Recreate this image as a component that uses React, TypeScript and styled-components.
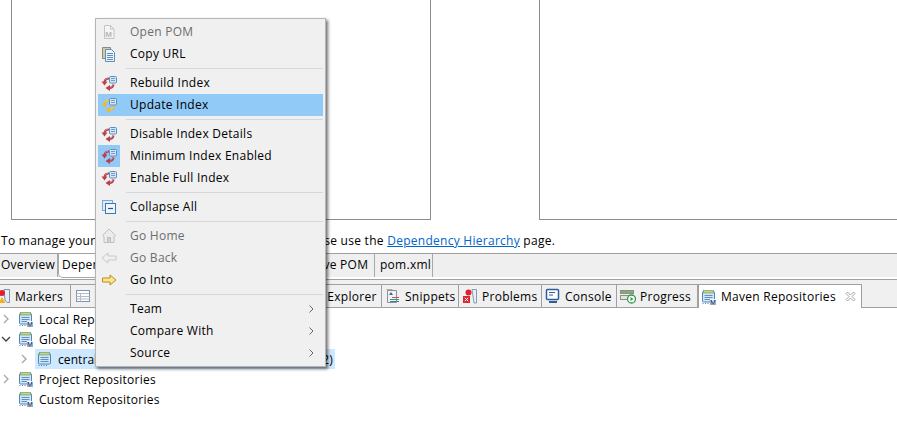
import React from "react";
import styled, { createGlobalStyle } from "styled-components";

const Global = createGlobalStyle`
  html, body { margin: 0; padding: 0; background: #fff; }
  body { font-family: "Open Sans", "Noto Sans", "Liberation Sans", sans-serif; font-size: 12px; color: #000; letter-spacing: .27px; }
`;

const Page = styled.div`
  position: relative;
  width: 897px;
  height: 426px;
  overflow: hidden;
  background: #fff;
`;
const Panels = styled.div`
  display: flex;
  height: 220px;
  padding-left: 11px;
  box-sizing: border-box;
`;
const LeftPanel = styled.div`
  width: 420px;
  box-sizing: border-box;
  border: 1px solid #8c8c8c;
  border-top: 0;
`;
const RightPanel = styled.div`
  flex: 1;
  margin-left: 108px;
  border-left: 1px solid #8c8c8c;
  border-bottom: 1px solid #8c8c8c;
`;
const Hint = styled.div`
  height: 33px;
  box-sizing: border-box;
  padding: 12px 0 0 1px;
  line-height: 18px;
  white-space: nowrap;
`;
const Link = styled.a`
  color: #0066cc;
  text-decoration: underline;
`;
const EditorBar = styled.div`
  display: flex;
  height: 23px;
  background: #efefef;
  border-top: 1px solid #a0a0a0;
  margin-bottom: 2px;
`;
const EditorTab = styled.div<{ $w: number; $pad: number; $active?: boolean }>`
  width: ${(p) => p.$w}px;
  box-sizing: border-box;
  height: ${(p) => (p.$active ? 24 : 23)}px;
  padding-left: ${(p) => p.$pad}px;
  line-height: 22px;
  white-space: nowrap;
  background: ${(p) => (p.$active ? "#fff" : "#efefef")};
  border-right: 1px solid #a8a8a8;
  border-left: ${(p) => (p.$active ? "1px solid #a8a8a8" : "0")};
  border-bottom: ${(p) => (p.$active ? "1px solid #a8a8a8" : "0")};
  border-bottom-left-radius: ${(p) => (p.$active ? 5 : 0)}px;
`;
const ViewBar = styled.div`
  display: flex;
  height: 23px;
  padding-top: 4px;
  background: #f0f0f0;
  border-top: 1px solid #a0a0a0;
  border-bottom: 1px solid #a0a0a0;
`;
const ViewTab = styled.div<{ $w: number; $pad?: number; $active?: boolean }>`
  display: flex;
  align-items: center;
  flex: none;
  width: ${(p) => p.$w}px;
  box-sizing: border-box;
  height: ${(p) => (p.$active ? 24 : 23)}px;
  gap: 4px;
  padding-left: ${(p) => p.$pad ?? 3}px;
  white-space: nowrap;
  background: ${(p) => (p.$active ? "#fff" : "#f0f0f0")};
  border-top: 1px solid #a0a0a0;
  border-right: 1px solid #a0a0a0;
  border-left: ${(p) => (p.$active ? "1px solid #a0a0a0" : "0")};
`;
const ClippedTab = styled(ViewTab)`
  overflow: hidden;
`;
const Spacer = styled.span`
  flex: 1;
`;
const Tree = styled.div`
  display: flex;
  flex-direction: column;
  margin-top: 1px;
`;
const TreeRow = styled.div<{ $level: number }>`
  display: flex;
  align-items: center;
  height: 20px;
  padding-left: ${(p) => p.$level * 18}px;
  white-space: nowrap;
`;
const Twisty = styled.span`
  display: flex;
  justify-content: center;
  width: 12px;
  flex: none;
  margin-right: 6px;
`;
const TreeLabel = styled.span<{ $selected?: boolean }>`
  display: flex;
  align-items: center;
  gap: 5px;
  height: 20px;
  padding-right: 2px;
  margin-left: ${(p) => (p.$selected ? -1 : 0)}px;
  padding-left: ${(p) => (p.$selected ? 2 : 0)}px;
  letter-spacing: ${(p) => (p.$selected ? ".07px" : "inherit")};
  background: ${(p) => (p.$selected ? "#cde8ff" : "transparent")};
`;
const Menu = styled.div`
  position: absolute;
  left: 95px;
  top: 18px;
  width: 231px;
  box-sizing: border-box;
  padding: 2px;
  background: #f0f0f0;
  border: 1px solid #b5b5b5;
  box-shadow: 2px 2px 3px rgba(0, 0, 0, 0.55);
`;
const MenuItem = styled.div<{ $hover?: boolean; $disabled?: boolean }>`
  display: flex;
  align-items: center;
  height: 22px;
  white-space: nowrap;
  color: ${(p) => (p.$disabled ? "#6d6d6d" : "#000")};
  background: ${(p) => (p.$hover ? "#91c9f7" : "transparent")};
`;
const IconCell = styled.span<{ $checked?: boolean }>`
  display: flex;
  align-items: center;
  justify-content: center;
  flex: none;
  width: 22px;
  height: 22px;
  margin-right: 10px;
  background: ${(p) => (p.$checked ? "#91c9f7" : "transparent")};
`;
const ItemLabel = styled.span`
  flex: 1;
  padding-bottom: 2px;
`;
const Arrow = styled.span`
  display: flex;
  margin-right: 9px;
`;
const Separator = styled.div`
  height: 7px;
  margin-left: 28px;
  display: flex;
  align-items: center;
  &::before {
    content: "";
    flex: 1;
    height: 1px;
    background: #d7d7d7;
  }
`;

const RepoIcon = ({ badge = true }: { badge?: boolean }) => (
  <svg width="16" height="16" viewBox="0 0 16 16" style={{ flex: "none" }}>
    <rect x="1.5" y="2.5" width="12" height="10.5" rx="1" fill="#d3e6f8" stroke="#4f86b8" />
    <rect x="2.5" y="1.5" width="10" height="2.5" fill="#b9d58a" stroke="#7a9c66" strokeWidth=".7" />
    <path d="M3.500 6.500h8M3.500 8.500h8M3.500 10.500h8" stroke="#5f92c4" />
    <path d="M1.500 14.500h1M4 14.500h1M6.500 14.500h1M9 14.500h1" stroke="#4f86b8" />
    {badge && (
      <>
        <rect x="9" y="10" width="7" height="6" fill="#fff" opacity=".9" />
        <text x="9" y="15.800" fontSize="7" fontWeight="700" letterSpacing="0" fontFamily="Liberation Sans" fill="#1f4f86">M</text>
      </>
    )}
  </svg>
);

const IndexIcon = ({ yellow }: { yellow?: boolean }) => {
  const main = yellow ? "#eeb92e" : "#b8404a";
  return (
    <svg width="16" height="16" viewBox="0 0 16 16">
      <rect x="8.500" y="1.500" width="7" height="6.500" rx="1" fill="#d3e6f8" stroke="#5f8fbd" />
      <path d="M10 3.500h4M10 5.500h4" stroke="#6f9cc8" />
      <path d="M8 3.500C5.500 3.500 3.800 4.800 3.500 7" fill="none" stroke={main} strokeWidth="2.200" />
      <path d="M0.500 6.500h6l-3 4z" fill={main} />
      <path d="M7 3.200C5.500 3.300 4.500 4 4 5.200" fill="none" stroke="#fff" strokeOpacity=".45" strokeWidth=".7" />
      <path d="M12.500 9.500C12 11.800 10.500 12.900 8.500 13" fill="none" stroke={main} strokeWidth="2.200" />
      <path d="M9 10v6l-4.500-3z" fill={main} />
      <path d="M11.800 10C11.300 11.300 10.500 12 9.500 12.300" fill="none" stroke="#fff" strokeOpacity=".45" strokeWidth=".7" />
    </svg>
  );
};

const PomIcon = () => (
  <svg width="16" height="16" viewBox="0 0 16 16">
    <path d="M3.500 1.500h6l3.500 3.500v9.500H3.500z" fill="#f4f4f4" stroke="#c4c4c4" />
    <path d="M9.500 1.500V5H13" fill="none" stroke="#c4c4c4" />
    <text x="4.300" y="13" fontSize="8" fontWeight="700" letterSpacing="0" fontFamily="Liberation Sans" fill="#b8b8b8">M</text>
  </svg>
);
const CopyIcon = () => (
  <svg width="16" height="16" viewBox="0 0 16 16">
    <path d="M1.500 1.500h8v11h-8z" fill="#d8c9a0" stroke="#8d8a78" />
    <path d="M4.500 3.500h6l3 3v9h-9z" fill="#eaf3fb" stroke="#5f8fbd" />
    <path d="M6 7.500h6M6 9.500h6M6 11.500h6M6 13.500h6" stroke="#5f8fbd" />
  </svg>
);
const CollapseIcon = () => (
  <svg width="16" height="16" viewBox="0 0 16 16">
    <rect x="1.500" y="1.500" width="10" height="10" fill="#dcebf8" stroke="#7ea8cf" />
    <rect x="4.500" y="4.500" width="10" height="10" fill="#eef6fc" stroke="#3f78ad" />
    <path d="M7 9.500h5" stroke="#25588c" strokeWidth="1.200" />
  </svg>
);
const HomeIcon = () => (
  <svg width="16" height="16" viewBox="0 0 16 16">
    <path d="M8 1 1.500 7.500 3 8.500V14.500H13V8.500L14.500 7.500 8 1z" fill="#ececec" stroke="#c0c0c0" />
    <rect x="6.500" y="9.500" width="3" height="5" fill="#cfcfcf" stroke="#c0c0c0" />
  </svg>
);
const BackIcon = () => (
  <svg width="16" height="16" viewBox="0 0 16 16">
    <path d="M1 8 7 3v3h8v4H7v3z" fill="#f0f0f0" stroke="#c8c8c8" />
  </svg>
);
const ForwardIcon = () => (
  <svg width="16" height="16" viewBox="0 0 16 16">
    <path d="M15 8 9 3v3H1.500v4H9v3z" fill="#fbe58c" stroke="#b98a22" />
  </svg>
);
const MenuChevron = () => (
  <svg width="5" height="8" viewBox="0 0 5 8">
    <path d="M.5.500 4 4 .5 7.500" fill="none" stroke="#666" />
  </svg>
);
const TreeChevron = ({ open }: { open?: boolean }) =>
  open ? (
    <svg width="10" height="7" viewBox="0 0 10 7">
      <path d="M1 1l4 4 4-4" fill="none" stroke="#404040" strokeWidth="1.300" />
    </svg>
  ) : (
    <svg width="7" height="10" viewBox="0 0 7 10">
      <path d="M1 1l4 4-4 4" fill="none" stroke="#a6a6a6" strokeWidth="1.300" />
    </svg>
  );
const MarkersIcon = () => (
  <svg width="16" height="16" viewBox="0 0 16 16" style={{ flex: "none" }}>
    <path d="M9 1.500h5.500v13H12L10 12z" fill="#e6eef6" stroke="#7f93aa" />
    <circle cx="7" cy="5" r="3" fill="#e0202c" />
    <path d="M7 9 10.500 15h-7z" fill="#f2b01e" />
  </svg>
);
const TableIcon = () => (
  <svg width="16" height="16" viewBox="0 0 16 16" style={{ flex: "none" }}>
    <rect x="1.500" y="2.500" width="13" height="11" fill="#fff" stroke="#7f93aa" />
    <path d="M1.500 5.500h13M1.500 8.500h13M1.500 11h13M5.500 5.500V13.500" stroke="#aebccb" fill="none" />
  </svg>
);
const SnippetsIcon = () => (
  <svg width="16" height="16" viewBox="0 0 16 16" style={{ flex: "none" }}>
    <path d="M2.500 2.500h9v12h-9z" fill="#eef3f8" stroke="#8a8fa0" />
    <path d="M1.500 1.500h6" stroke="#b9ab80" />
    <path d="M4 7l2-3 2 3z" fill="#3a6aa0" />
    <path d="M7 9.500h7" stroke="#d85050" />
    <path d="M5 11.500h9" stroke="#3f9a5a" />
    <path d="M5 13.500h9" stroke="#3f78ad" />
  </svg>
);
const ProblemsIcon = () => (
  <svg width="16" height="16" viewBox="0 0 16 16" style={{ flex: "none" }}>
    <path d="M10 1.500h4.500V15H12z" fill="#e8eef5" stroke="#8a9ab0" />
    <circle cx="6.500" cy="4.500" r="3" fill="#e0202c" />
    <rect x="1" y="8" width="7" height="7" fill="#d8282f" />
    <path d="M2.800 9.800l3.400 3.400M6.200 9.800l-3.400 3.400" stroke="#fff" />
  </svg>
);
const ConsoleIcon = () => (
  <svg width="16" height="16" viewBox="0 0 16 16" style={{ flex: "none" }}>
    <rect x="1.500" y="1.500" width="12" height="10" rx="1" fill="#fff" stroke="#2c5d9a" strokeWidth="1.500" />
    <path d="M4 4.500h6M4 7h4" stroke="#2c5d9a" />
    <path d="M4 14h8" stroke="#2c5d9a" strokeWidth="2" />
  </svg>
);
const ProgressIcon = () => (
  <svg width="16" height="16" viewBox="0 0 16 16" style={{ flex: "none" }}>
    <rect x="0.500" y="2.500" width="13" height="3" fill="#7fae6e" stroke="#8a8f88" />
    <rect x="0.500" y="7.500" width="10" height="4" fill="#dde6da" stroke="#8a8f88" />
    <circle cx="11.500" cy="11" r="4" fill="#fff" stroke="#2e9a4a" strokeWidth="1.300" />
    <path d="M10.500 9l3 2-3 2z" fill="#2e9a4a" />
  </svg>
);
const CloseIcon = () => (
  <svg width="11" height="11" viewBox="0 0 11 11" style={{ flex: "none" }}>
    <path d="M1 2.500 2.500 1 5.500 4 8.500 1 10 2.500 7 5.500 10 8.500 8.500 10 5.500 7 2.500 10 1 8.500 4 5.500z" fill="#fff" stroke="#9a9a9a" strokeWidth=".9" />
  </svg>
);

export default function App() {
  return (
    <Page>
      <Global />
      <Panels>
        <LeftPanel />
        <RightPanel />
      </Panels>
      <Hint>
        To manage your transitive dependency exclusions, please use the <Link>Dependency Hierarchy</Link> page.
      </Hint>
      <EditorBar>
        <EditorTab $w={58} $pad={1}>Overview</EditorTab>
        <EditorTab $w={86} $pad={3} $active>Dependencies</EditorTab>
        <EditorTab $w={139} $pad={4}>Dependency Hierarchy</EditorTab>
        <EditorTab $w={92} $pad={4}>Effective POM</EditorTab>
        <EditorTab $w={58} $pad={5}>pom.xml</EditorTab>
      </EditorBar>
      <ViewBar>
        <ClippedTab $w={71} $pad={0}><span style={{ display: "flex", marginLeft: -5 }}><MarkersIcon /></span>Markers</ClippedTab>
        <ViewTab $w={90} $pad={4}><TableIcon />Properties</ViewTab>
        <ViewTab $w={70}>Servers</ViewTab>
        <ViewTab $w={151} $pad={22}>Data Source Explorer</ViewTab>
        <ViewTab $w={77}><SnippetsIcon />Snippets</ViewTab>
        <ViewTab $w={83}><ProblemsIcon />Problems</ViewTab>
        <ViewTab $w={75}><ConsoleIcon />Console</ViewTab>
        <ViewTab $w={81}><ProgressIcon />Progress</ViewTab>
        <ViewTab $w={164} $pad={2} $active>
          <RepoIcon />Maven Repositories<Spacer /><CloseIcon /><Spacer />
        </ViewTab>
      </ViewBar>
      <Tree>
        <TreeRow $level={0}><Twisty><TreeChevron /></Twisty><TreeLabel><RepoIcon />Local Repositories</TreeLabel></TreeRow>
        <TreeRow $level={0}><Twisty><TreeChevron open /></Twisty><TreeLabel><RepoIcon />Global Repositories</TreeLabel></TreeRow>
        <TreeRow $level={1}><Twisty><TreeChevron /></Twisty><TreeLabel $selected><RepoIcon badge={false} />central (https://repo.maven.apache.org/maven2)</TreeLabel></TreeRow>
        <TreeRow $level={0}><Twisty><TreeChevron /></Twisty><TreeLabel><RepoIcon />Project Repositories</TreeLabel></TreeRow>
        <TreeRow $level={0}><Twisty /><TreeLabel><RepoIcon />Custom Repositories</TreeLabel></TreeRow>
      </Tree>
      <Menu>
        <MenuItem $disabled><IconCell><PomIcon /></IconCell><ItemLabel>Open POM</ItemLabel></MenuItem>
        <MenuItem><IconCell><CopyIcon /></IconCell><ItemLabel>Copy URL</ItemLabel></MenuItem>
        <Separator />
        <MenuItem><IconCell><IndexIcon /></IconCell><ItemLabel>Rebuild Index</ItemLabel></MenuItem>
        <MenuItem $hover><IconCell><IndexIcon yellow /></IconCell><ItemLabel>Update Index</ItemLabel></MenuItem>
        <Separator />
        <MenuItem><IconCell><IndexIcon /></IconCell><ItemLabel>Disable Index Details</ItemLabel></MenuItem>
        <MenuItem><IconCell $checked><IndexIcon /></IconCell><ItemLabel>Minimum Index Enabled</ItemLabel></MenuItem>
        <MenuItem><IconCell><IndexIcon /></IconCell><ItemLabel>Enable Full Index</ItemLabel></MenuItem>
        <Separator />
        <MenuItem><IconCell><CollapseIcon /></IconCell><ItemLabel>Collapse All</ItemLabel></MenuItem>
        <Separator />
        <MenuItem $disabled><IconCell><HomeIcon /></IconCell><ItemLabel>Go Home</ItemLabel></MenuItem>
        <MenuItem $disabled><IconCell><BackIcon /></IconCell><ItemLabel>Go Back</ItemLabel></MenuItem>
        <MenuItem><IconCell><ForwardIcon /></IconCell><ItemLabel>Go Into</ItemLabel></MenuItem>
        <Separator />
        <MenuItem><IconCell /><ItemLabel>Team</ItemLabel><Arrow><MenuChevron /></Arrow></MenuItem>
        <MenuItem><IconCell /><ItemLabel>Compare With</ItemLabel><Arrow><MenuChevron /></Arrow></MenuItem>
        <MenuItem><IconCell /><ItemLabel>Source</ItemLabel><Arrow><MenuChevron /></Arrow></MenuItem>
      </Menu>
    </Page>
  );
}
